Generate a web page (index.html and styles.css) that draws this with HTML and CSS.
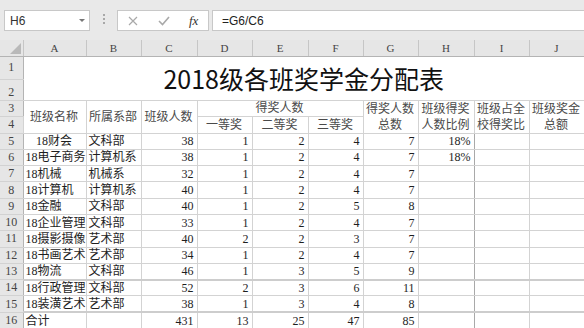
FILE: index.html
```html
<!DOCTYPE html>
<html lang="zh-CN">
<head>
  <meta charset="UTF-8">
  <meta name="viewport" content="width=device-width, initial-scale=1.0">
  <title>2018级各班奖学金分配表</title>
  <link rel="stylesheet" href="styles.css">
</head>
<body>
  <!-- Formula bar -->
  <div class="toolbar">
    <div class="name-box">
      <span>H6</span>
      <span class="caret"></span>
    </div>
    <div class="grip"><i></i><i></i><i></i></div>
    <div class="fx-buttons">
      <svg class="btn-x" width="10" height="10" viewBox="0 0 10 10"><path d="M1 1 L9 9 M9 1 L1 9" stroke="#a9a9a9" stroke-width="1.2" fill="none"/></svg>
      <svg class="btn-ok" width="12" height="10" viewBox="0 0 12 10"><path d="M1 5 L4.5 8.5 L11 1" stroke="#a9a9a9" stroke-width="1.6" fill="none"/></svg>
      <span class="fx">fx</span>
    </div>
    <div class="formula">=G6/C6</div>
  </div>

  <!-- Sheet -->
  <table class="sheet">
    <colgroup>
      <col class="c-rh"><col class="c-a"><col class="c-b"><col class="c-c"><col class="c-d"><col class="c-e">
      <col class="c-f"><col class="c-g"><col class="c-h"><col class="c-i"><col class="c-j">
    </colgroup>
    <tr class="col-head">
      <th class="corner"><div class="tri"></div></th>
      <th>A</th><th>B</th><th>C</th><th>D</th><th>E</th><th>F</th><th>G</th><th>H</th><th>I</th><th>J</th>
    </tr>
    <tr class="r1">
      <th class="rh top">1</th>
      <td class="title" colspan="10" rowspan="2">2018级各班奖学金分配表</td>
    </tr>
    <tr class="r2">
      <th class="rh low">2</th>
    </tr>
    <tr class="hr">
      <th class="rh">3</th>
      <td class="head" rowspan="2">班级名称</td>
      <td class="head" rowspan="2">所属系部</td>
      <td class="head" rowspan="2">班级人数</td>
      <td class="head" colspan="3">得奖人数</td>
      <td class="head wrap" rowspan="2">得奖人数<br>总数</td>
      <td class="head wrap" rowspan="2">班级得奖<br>人数比例</td>
      <td class="head wrap" rowspan="2">班级占全<br>校得奖比</td>
      <td class="head wrap" rowspan="2">班级奖金<br>总额</td>
    </tr>
    <tr class="hr">
      <th class="rh">4</th>
      <td class="head">一等奖</td>
      <td class="head">二等奖</td>
      <td class="head">三等奖</td>
    </tr>
    <tr class="dr">
      <th class="rh">5</th>
      <td class="mid">18财会</td><td class="txt">文科部</td>
      <td class="num">38</td><td class="num">1</td><td class="num">2</td><td class="num">4</td><td class="num">7</td>
      <td class="num edge">18%</td><td></td><td></td>
    </tr>
    <tr class="dr">
      <th class="rh">6</th>
      <td class="txt">18电子商务</td><td class="txt">计算机系</td>
      <td class="num">38</td><td class="num">1</td><td class="num">2</td><td class="num">4</td><td class="num">7</td>
      <td class="num edge">18%</td><td></td><td></td>
    </tr>
    <tr class="dr">
      <th class="rh">7</th>
      <td class="txt">18机械</td><td class="txt">机械系</td>
      <td class="num">32</td><td class="num">1</td><td class="num">2</td><td class="num">4</td><td class="num">7</td>
      <td class="edge"></td><td></td><td></td>
    </tr>
    <tr class="dr">
      <th class="rh">8</th>
      <td class="txt">18计算机</td><td class="txt">计算机系</td>
      <td class="num">40</td><td class="num">1</td><td class="num">2</td><td class="num">4</td><td class="num">7</td>
      <td class="edge"></td><td></td><td></td>
    </tr>
    <tr class="dr">
      <th class="rh">9</th>
      <td class="txt">18金融</td><td class="txt">文科部</td>
      <td class="num">40</td><td class="num">1</td><td class="num">2</td><td class="num">5</td><td class="num">8</td>
      <td class="edge"></td><td></td><td></td>
    </tr>
    <tr class="dr">
      <th class="rh">10</th>
      <td class="txt">18企业管理</td><td class="txt">文科部</td>
      <td class="num">33</td><td class="num">1</td><td class="num">2</td><td class="num">4</td><td class="num">7</td>
      <td class="edge"></td><td></td><td></td>
    </tr>
    <tr class="dr">
      <th class="rh">11</th>
      <td class="txt">18摄影摄像</td><td class="txt">艺术部</td>
      <td class="num">40</td><td class="num">2</td><td class="num">2</td><td class="num">3</td><td class="num">7</td>
      <td class="edge"></td><td></td><td></td>
    </tr>
    <tr class="dr">
      <th class="rh">12</th>
      <td class="txt">18书画艺术</td><td class="txt">艺术部</td>
      <td class="num">34</td><td class="num">1</td><td class="num">2</td><td class="num">4</td><td class="num">7</td>
      <td class="edge"></td><td></td><td></td>
    </tr>
    <tr class="dr">
      <th class="rh">13</th>
      <td class="txt">18物流</td><td class="txt ind">文科部</td>
      <td class="num">46</td><td class="num">1</td><td class="num">3</td><td class="num">5</td><td class="num">9</td>
      <td class="edge"></td><td></td><td></td>
    </tr>
    <tr class="dr split">
      <th class="rh">14</th>
      <td class="txt">18行政管理</td><td class="txt">文科部</td>
      <td class="num">52</td><td class="num">2</td><td class="num">3</td><td class="num">6</td><td class="num">11</td>
      <td class="edge"></td><td></td><td></td>
    </tr>
    <tr class="dr">
      <th class="rh">15</th>
      <td class="txt">18装潢艺术</td><td class="txt">艺术部</td>
      <td class="num">38</td><td class="num">1</td><td class="num">3</td><td class="num">4</td><td class="num">8</td>
      <td class="edge"></td><td></td><td></td>
    </tr>
    <tr class="dr split">
      <th class="rh">16</th>
      <td class="txt">合计</td><td></td>
      <td class="num">431</td><td class="num">13</td><td class="num">25</td><td class="num">47</td><td class="num">85</td>
      <td class="edge"></td><td></td><td></td>
    </tr>
  </table>
</body>
</html>
```

FILE: styles.css
```css
body {
  margin: 0;
  background: #fff;
  font-family: "Liberation Serif", "Noto Sans CJK SC", serif;
  font-size: 12px;
  color: #1e1e1e;
  overflow: hidden;
}

/* Formula bar */
.toolbar {
  height: 40px;
  box-sizing: border-box;
  padding-top: 10px;
  background: #e9e9e9;
  display: flex;
  align-items: flex-start;
}
.name-box {
  margin-left: 4px;
  width: 86px;
  height: 21px;
  box-sizing: border-box;
  padding: 0 4px 0 5px;
  background: #fff;
  border: 1px solid #c8c8c8;
  display: flex;
  align-items: center;
  justify-content: space-between;
  font-family: "Liberation Sans", Arial, sans-serif;
  font-size: 12px;
  color: #333;
}
.caret {
  width: 0;
  height: 0;
  border-left: 3px solid transparent;
  border-right: 3px solid transparent;
  border-top: 3px solid #777;
}
.grip {
  margin: 4px 0 0 13px;
  display: flex;
  flex-direction: column;
  gap: 2px;
}
.grip i { width: 2px; height: 2px; background: #a8a8a8; }
.fx-buttons {
  margin-left: 12px;
  width: 92px;
  height: 21px;
  box-sizing: border-box;
  background: #fff;
  border: 1px solid #c8c8c8;
  display: flex;
  align-items: center;
}
.btn-x { margin-left: 10px; }
.btn-ok { margin-left: 20px; }
.fx {
  margin-left: 19px;
  font-family: "Liberation Serif", serif;
  font-style: italic;
  font-size: 13px;
  color: #333;
}
.formula {
  margin-left: 3px;
  flex: 1;
  height: 21px;
  box-sizing: border-box;
  padding-left: 9px;
  background: #fff;
  border: 1px solid #c8c8c8;
  border-right: none;
  display: flex;
  align-items: center;
  font-family: "Liberation Sans", Arial, sans-serif;
  font-size: 12px;
  color: #222;
}

/* Sheet grid */
.sheet {
  width: 584px;
  table-layout: fixed;
  border-collapse: collapse;
}
.c-rh { width: 23px; }
.c-a { width: 63px; }
.c-b, .c-d, .c-f, .c-g, .c-i, .c-j { width: 55px; }
.c-c, .c-e, .c-h { width: 56px; }

.sheet th {
  padding: 0;
  background: #e6e6e6;
  font-weight: normal;
  color: #444;
}
.col-head { height: 16px; }
.col-head th {
  font-size: 11px;
  border-right: 1px solid #c6c6c6;
  border-bottom: 1px solid #b4b4b4;
}
.corner { vertical-align: bottom; }
.tri {
  margin: 0 2px 2px auto;
  width: 0;
  height: 0;
  border-left: 11px solid transparent;
  border-bottom: 11px solid #b9b9b9;
}
.rh {
  font-size: 12px;
  text-align: center;
  border-right: 1px solid #b4b4b4;
  border-bottom: 1px solid #d2d2d2;
}
.rh.top { vertical-align: middle; }
.rh.low { vertical-align: bottom; padding-bottom: 0; }

.r1 { height: 23px; }
.r2 { height: 21px; }
.hr { height: 16px; }
.dr { height: 16.3px; }

.sheet td {
  padding: 0 3px 0 2px;
  border: 1px solid #d3d3d3;
  line-height: 14px;
  white-space: nowrap;
  overflow: hidden;
}
.sheet td.title {
  padding: 0;
  border: none;
  border-bottom: 1px solid #d3d3d3;
  text-align: center;
  font-family: "Noto Sans CJK SC", sans-serif;
  font-size: 25px;
  line-height: 1;
  color: #111;
}
.sheet td.head {
  text-align: center;
  color: #4a4a4a;
}
.sheet td.wrap { line-height: 16px; }
.num { text-align: right; }
.mid { text-align: center; padding-left: 8px; }
.ind { padding-left: 5px; }
.sheet td.edge { border-right-color: #a9a9a9; }
.split td { border-top: 2px solid #cdcdcd; }
```
